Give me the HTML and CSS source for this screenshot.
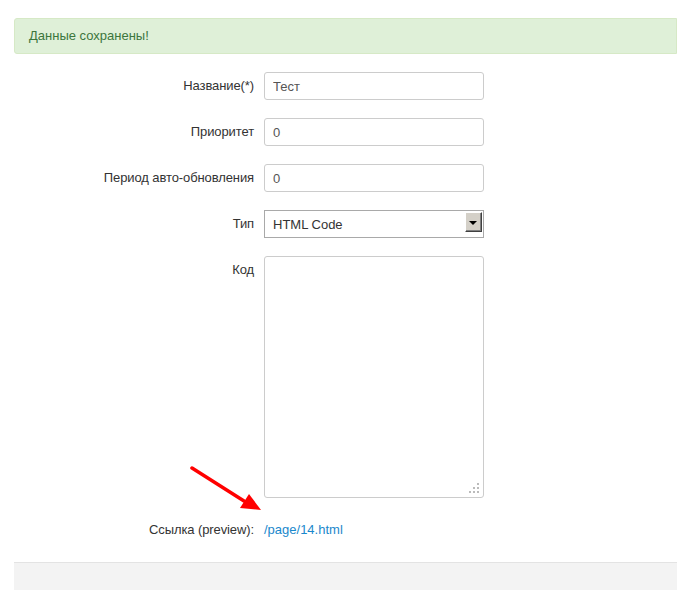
FILE: index.html
```html
<!DOCTYPE html>
<html>
<head>
<meta charset="utf-8">
<title>Блок</title>
<link rel="stylesheet" href="styles.css">
</head>
<body>
<div class="page">

<div class="alert">Данные сохранены!</div>

<form class="edit_form">
	<div class="row">
		<label class="row_label" for="name">Название(*)</label>
		<input class="field" id="name" type="text" value="Тест">
	</div>

	<div class="row">
		<label class="row_label" for="priority">Приоритет</label>
		<input class="field" id="priority" type="text" value="0">
	</div>

	<div class="row">
		<label class="row_label" for="refresh">Период авто-обновления</label>
		<input class="field" id="refresh" type="text" value="0">
	</div>

	<div class="row">
		<label class="row_label" for="type">Тип</label>
		<div class="select_wrap">
			<select class="field select" id="type">
				<option>HTML Code</option>
			</select>
			<span class="select_btn"><span class="select_tri"></span></span>
		</div>
	</div>

	<div class="row">
		<label class="row_label" for="code">Код</label>
		<div class="textarea_wrap">
			<textarea class="field code" id="code"></textarea>
			<svg class="grip" width="12" height="12" viewBox="0 0 12 12">
				<rect x="9" y="1" width="2" height="2" fill="#bbb"/>
				<rect x="5" y="5" width="2" height="2" fill="#bbb"/>
				<rect x="9" y="5" width="2" height="2" fill="#bbb"/>
				<rect x="1" y="9" width="2" height="2" fill="#bbb"/>
				<rect x="5" y="9" width="2" height="2" fill="#bbb"/>
				<rect x="9" y="9" width="2" height="2" fill="#bbb"/>
			</svg>
		</div>
	</div>

	<div class="row">
		<span class="row_label">Ссылка (preview):</span>
		<a class="preview" href="#">/page/14.html</a>
	</div>
</form>

<div class="footer"></div>

</div>

<!-- red pointer arrow drawn over the screenshot -->
<svg class="pointer" width="80" height="60" viewBox="0 0 80 60">
	<line x1="2" y1="3" x2="54" y2="36" stroke="#ff0000" stroke-width="3.5" stroke-linecap="round"/>
	<polygon points="71,45 50,43 59,29" fill="#ff0000"/>
</svg>
</body>
</html>
```

FILE: styles.css
```css
html, body {
	margin: 0;
	padding: 0;
	background: #fff;
}

body {
	font-family: "Liberation Sans", Arial, sans-serif;
	font-size: 13px;
	color: #333;
	overflow: hidden;
}

.page {
	margin-left: 14px;
	padding-top: 18px;
}

.alert {
	background: #dff0d8;
	border: 1px solid #d6e9c6;
	border-radius: 3px 0 0 3px;
	color: #3c763d;
	padding: 8px 14px;
	line-height: 18px;
}

.edit_form {
	padding-top: 18px;
}

.row {
	display: flex;
	align-items: flex-start;
	margin-bottom: 18px;
}

.row_label {
	width: 240px;
	padding-right: 10px;
	text-align: right;
	line-height: 28px;
	letter-spacing: -0.1px;
	color: #333;
}

.field {
	box-sizing: border-box;
	width: 220px;
	height: 28px;
	margin: 0;
	padding: 0 8px;
	border: 1px solid #ccc;
	border-radius: 3px;
	font-family: "Liberation Sans", Arial, sans-serif;
	font-size: 13px;
	color: #555;
	background: #fff;
	outline: none;
}

.select_wrap, .textarea_wrap {
	position: relative;
}

.select {
	appearance: none;
	-webkit-appearance: none;
	border: 1px solid #a9a9a9;
	border-radius: 0;
	color: #333;
}

.select_btn {
	position: absolute;
	top: 2px;
	right: 2px;
	width: 17px;
	height: 20px;
	box-sizing: border-box;
	background: #d4d0c8;
	border: 1px solid;
	border-color: #fff #404040 #404040 #fff;
	box-shadow: inset -1px -1px 0 #808080;
	display: flex;
	align-items: center;
	justify-content: center;
}

.select_tri {
	width: 0;
	height: 0;
	border-left: 4px solid transparent;
	border-right: 4px solid transparent;
	border-top: 4px solid #000;
	margin: 1px 1px 0 0;
}

.code {
	display: block;
	height: 242px;
	padding: 6px 8px;
	resize: none;
}

.grip {
	position: absolute;
	right: 4px;
	bottom: 4px;
}

.preview {
	line-height: 28px;
	color: #1a88cc;
	text-decoration: none;
}

.footer {
	border-top: 1px solid #e3e3e3;
	background: #f3f3f3;
	height: 40px;
}

.pointer {
	position: absolute;
	left: 190px;
	top: 465px;
}
```
